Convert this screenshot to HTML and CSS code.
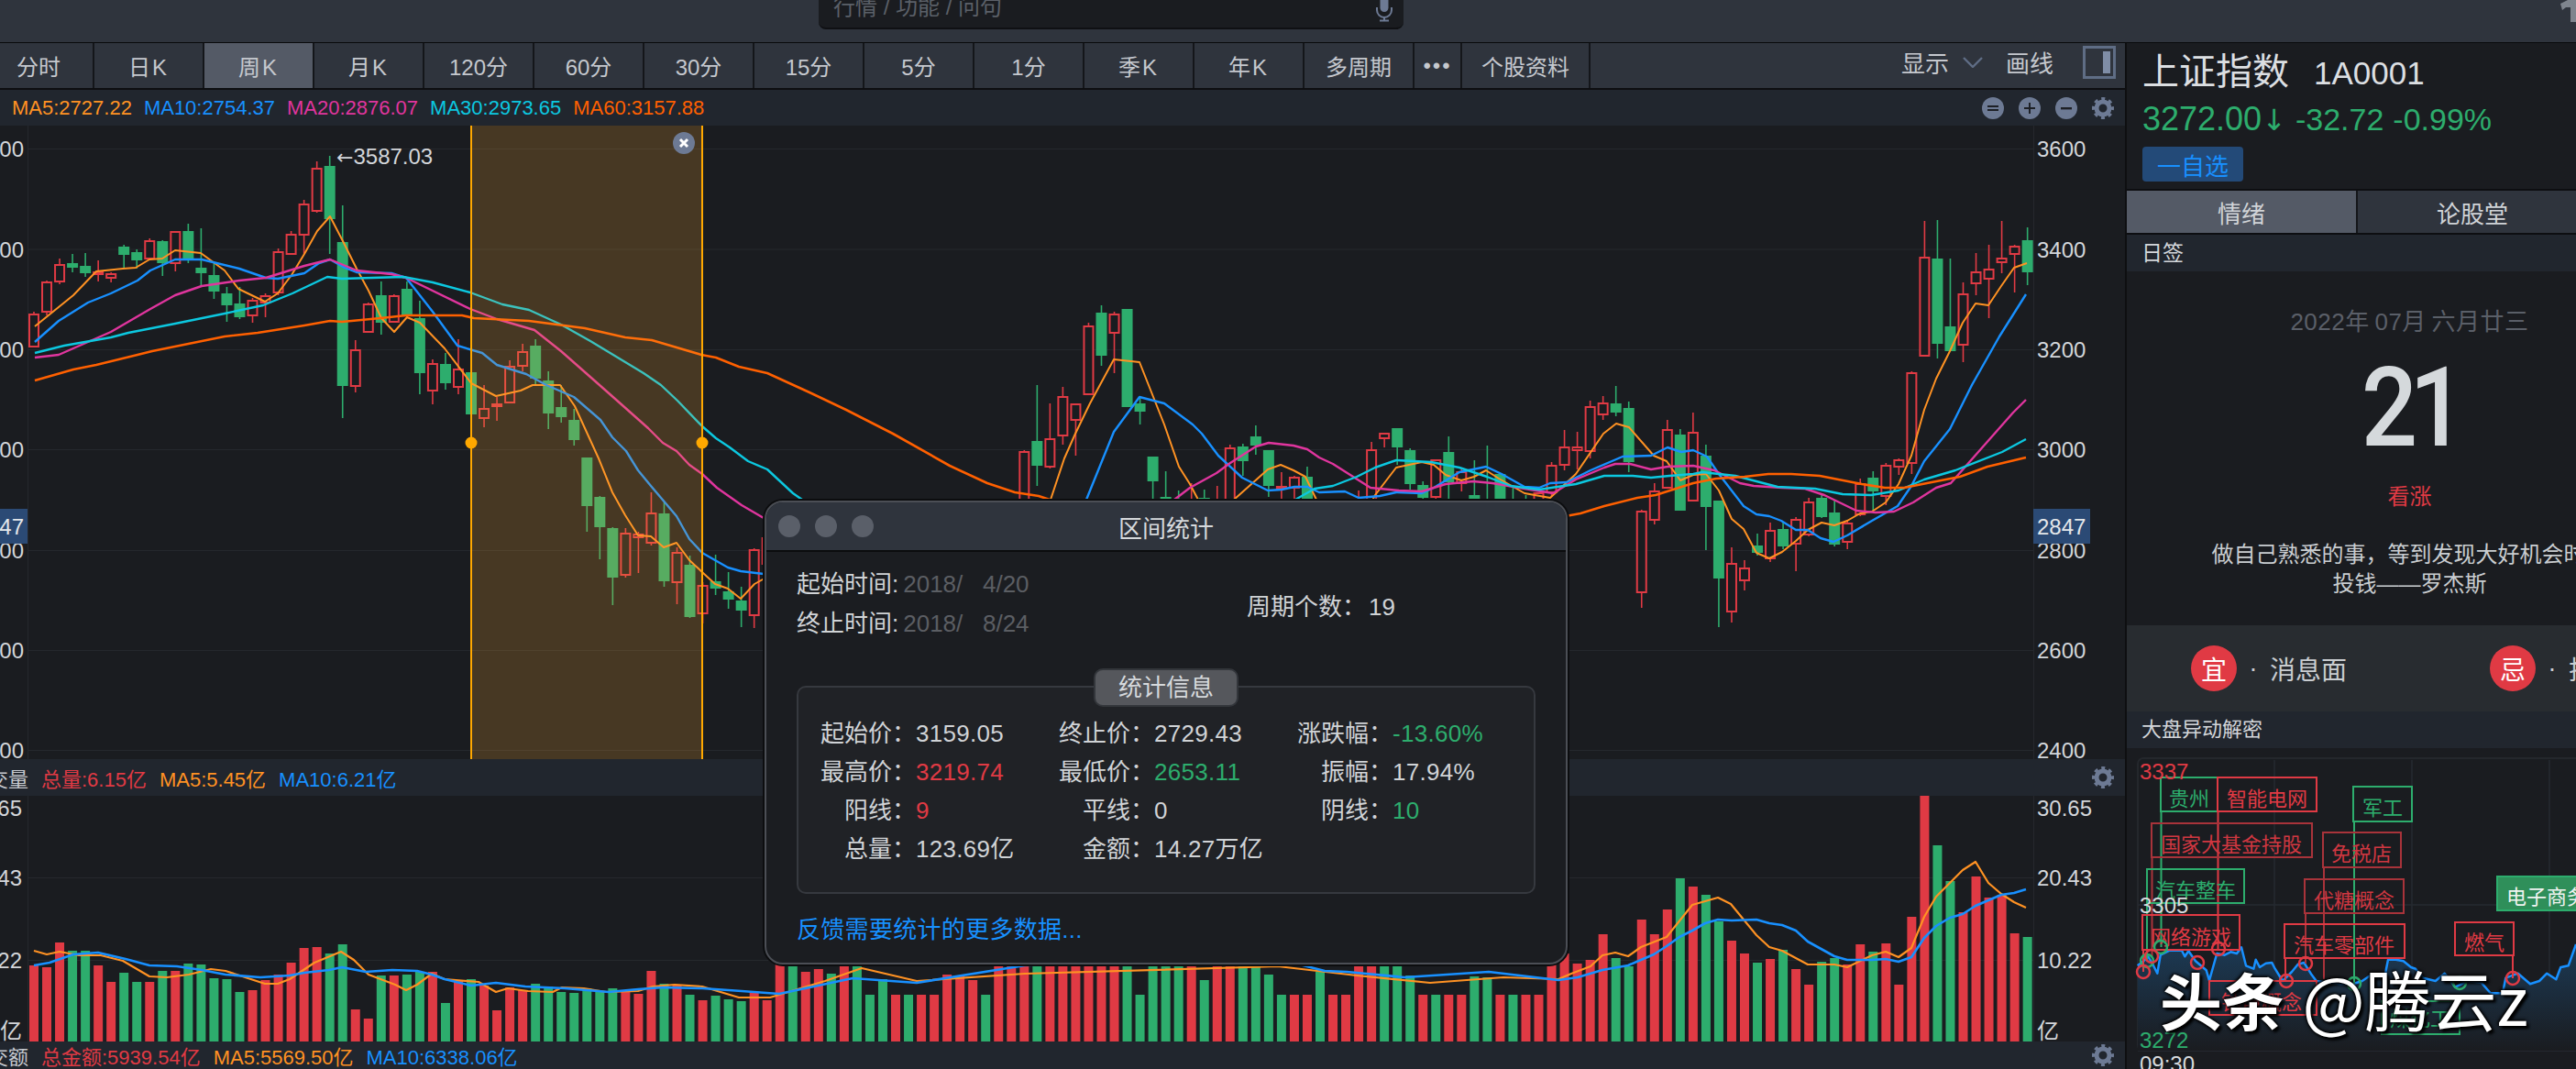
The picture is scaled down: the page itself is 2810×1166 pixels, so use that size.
FILE: index.html
```html
<!DOCTYPE html>
<html lang="zh">
<head>
<meta charset="utf-8">
<title>区间统计</title>
<link rel="stylesheet" href="styles.css">
</head>
<body>
<svg class="defs" width="0" height="0" aria-hidden="true">
  <symbol id="gear" viewBox="0 0 24 24">
    <circle cx="12" cy="12" r="7" fill="none" stroke="currentColor" stroke-width="5"/>
    <circle cx="12" cy="12" r="10" fill="none" stroke="currentColor" stroke-width="4" stroke-dasharray="3.9 3.95" stroke-dashoffset="2"/>
  </symbol>
</svg>
<div class="app">
  <header class="topbar">
    <div class="search">
      <span class="search-text">行情 / 功能 / 问句</span>
      <svg class="mic" viewBox="0 0 20 24" width="20" height="24"><rect x="5.5" y="-8" width="9" height="21" rx="4.5" fill="#6d7a94"/><path d="M2 8v3a8 8 0 0 0 16 0V8" fill="none" stroke="#6d7a94" stroke-width="2"/><path d="M10 19v3M5 22.5h10" stroke="#6d7a94" stroke-width="2"/></svg>
    </div>
    <svg class="corner" viewBox="0 0 17 24" width="17" height="24"><path d="M0 4 L8 0 H17 V24 H11 V8 H6 L2 11 Z" fill="#7f858e"/></svg>
  </header>
  <div class="main">
    <section class="left">
      <nav class="tabs">
        <span class="tab">分时</span><span class="tab tab-k">日K</span><span class="tab tab-k active">周K</span><span class="tab tab-k">月K</span><span class="tab">120分</span><span class="tab">60分</span><span class="tab">30分</span><span class="tab">15分</span><span class="tab">5分</span><span class="tab">1分</span><span class="tab tab-k">季K</span><span class="tab tab-k">年K</span><span class="tab">多周期</span><span class="tab tab-more">•••</span><span class="tab tab-info">个股资料</span>
        <div class="tools">
          <span class="tool-text">显示</span>
          <svg class="chev" viewBox="0 0 22 12" width="22" height="12"><path d="M1 1l10 10L21 1" fill="none" stroke="#5f6d85" stroke-width="2.4"/></svg>
          <span class="tool-text">画线</span>
          <svg class="layout" viewBox="0 0 36 36" width="36" height="36"><rect x="1.5" y="1.5" width="33" height="33" fill="none" stroke="#5f6d85" stroke-width="3"/><rect x="22" y="6" width="8" height="24" fill="#7f8da6"/></svg>
        </div>
      </nav>
      <div class="legend legend-main">
        <span class="ma5">MA5:2727.22</span><span class="ma10">MA10:2754.37</span><span class="ma20">MA20:2876.07</span><span class="ma30">MA30:2973.65</span><span class="ma60">MA60:3157.88</span>
        <div class="legend-tools">
          <svg class="round" viewBox="0 0 24 24" width="24" height="24"><circle cx="12" cy="12" r="12" fill="#6d7a94"/><path d="M6 9h12v2H6zM6 13h12v2H6z" fill="#1d2026"/></svg>
          <svg class="round" viewBox="0 0 24 24" width="24" height="24"><circle cx="12" cy="12" r="12" fill="#6d7a94"/><path d="M11 6h2v5h5v2h-5v5h-2v-5H6v-2h5z" fill="#1d2026"/></svg>
          <svg class="round" viewBox="0 0 24 24" width="24" height="24"><circle cx="12" cy="12" r="12" fill="#6d7a94"/><path d="M6 11h12v2.4H6z" fill="#1d2026"/></svg>
          <svg class="gear" width="24" height="24"><use href="#gear"/></svg>
        </div>
      </div>
      <svg id="kchart" class="plot" viewBox="0 137 2318 691" width="2318" height="691">
        <g class="grid">
          <path d="M30 162.5H2218M30 272H2218M30 381.500H2218M30 490.500H2218M30 600.500H2218M30 709.500H2218M30 818.500H2218M30.500 137V828M2218.500 137V828"/>
        </g>
        <g id="candles"></g>
        <g id="malines"></g>
        <rect class="sel-fill" x="514" y="137" width="252" height="691"/>
        <path class="sel-line" d="M514 137V828M766 137V828"/>
        <circle class="sel-dot" cx="514" cy="483" r="6.500"/>
        <circle class="sel-dot" cx="766" cy="483" r="6.500"/>
        <circle class="sel-close" cx="746" cy="156" r="12"/>
        <path class="sel-x" d="M742 152l8 8M750 152l-8 8"/>
        <text class="axis" x="26" y="171" text-anchor="end">3600</text>
        <text class="axis" x="26" y="281" text-anchor="end">3400</text>
        <text class="axis" x="26" y="390" text-anchor="end">3200</text>
        <text class="axis" x="26" y="499" text-anchor="end">3000</text>
        <text class="axis" x="26" y="609" text-anchor="end">2800</text>
        <text class="axis" x="26" y="718" text-anchor="end">2600</text>
        <text class="axis" x="26" y="827" text-anchor="end">2400</text>
        <rect class="cur" x="-40" y="555" width="70" height="38"/>
        <text class="axis white" x="26" y="583" text-anchor="end">2847</text>
        <text class="axis" x="2222" y="171">3600</text>
        <text class="axis" x="2222" y="281">3400</text>
        <text class="axis" x="2222" y="390">3200</text>
        <text class="axis" x="2222" y="499">3000</text>
        <text class="axis" x="2222" y="609">2800</text>
        <rect class="cur" x="2218" y="555" width="62" height="38"/>
        <text class="axis white" x="2222" y="583">2847</text>
        <text class="axis" x="2222" y="718">2600</text>
        <text class="axis" x="2222" y="827">2400</text>
        <text class="axis" x="367" y="179"><tspan class="arrow">←</tspan>3587.03</text>
      </svg>
      <div class="legend legend-sub">
        <span class="cut">成交量</span><span class="red">总量:6.15亿</span><span class="ma5">MA5:5.45亿</span><span class="ma10">MA10:6.21亿</span>
        <div class="legend-tools"><svg class="gear" width="24" height="24"><use href="#gear"/></svg></div>
      </div>
      <svg id="vchart" class="plot" viewBox="0 868 2318 268" width="2318" height="268">
        <g class="grid"><path d="M30 957.500H2218M30 1047.500H2218M30.500 868V1136M2218.500 868V1136"/></g>
        <g id="bars"></g>
        <g id="vlines"></g>
        <text class="axis" x="24" y="890" text-anchor="end">30.65</text>
        <text class="axis" x="24" y="966" text-anchor="end">20.43</text>
        <text class="axis" x="24" y="1056" text-anchor="end">10.22</text>
        <text class="axis" x="24" y="1133" text-anchor="end">亿</text>
        <text class="axis" x="2222" y="890">30.65</text>
        <text class="axis" x="2222" y="966">20.43</text>
        <text class="axis" x="2222" y="1056">10.22</text>
        <text class="axis" x="2222" y="1133">亿</text>
      </svg>
      <div class="legend legend-amt">
        <span class="cut">成交额</span><span class="red">总金额:5939.54亿</span><span class="ma5">MA5:5569.50亿</span><span class="ma10">MA10:6338.06亿</span>
        <div class="legend-tools"><svg class="gear" width="24" height="24"><use href="#gear"/></svg></div>
      </div>
    </section>
    <aside class="right">
      <div class="right-inner">
        <div class="quote-head">
          <div class="name-row"><span class="name">上证指数</span><span class="code">1A0001</span></div>
          <div class="price-row"><span class="price">3272.00<span class="price-arrow">↓</span></span><span class="chg">-32.72</span><span class="chg">-0.99%</span></div>
          <button class="fav">一自选</button>
        </div>
        <div class="rtabs"><span class="rtab active">情绪</span><span class="rtab">论股堂</span></div>
        <div class="rhead">日签</div>
        <div class="daily">
          <div class="date">2022年 07月 六月廿三</div>
          <div class="day">21</div>
          <div class="view">看涨</div>
          <p class="saying">做自己熟悉的事，等到发现大好机会时才投钱——罗杰斯</p>
        </div>
        <div class="yiji">
          <span class="badge">宜</span><span class="yj-dot">·</span><span class="yj-text">消息面</span>
          <span class="badge badge-second">忌</span><span class="yj-dot">·</span><span class="yj-text">技术面</span>
        </div>
        <div class="rhead rhead-mov">大盘异动解密</div>
        <div class="mini">
          <svg class="mini-svg" viewBox="2320 816 490 350" width="490" height="350">
            <defs><linearGradient id="area" x1="0" y1="0" x2="0" y2="1"><stop offset="0" stop-color="#1c3a55"/><stop offset="1" stop-color="#1a1c20"/></linearGradient></defs>
            <rect class="mini-frame" x="2332" y="827" width="600" height="319" rx="6"/>
            <path class="mini-grid" d="M2481 829V1146M2631 829V1146M2781 829V1146M2332 987H2810M2332 1146H2810"/>
            <path id="flowarea" fill="url(#area)" d=""/>
            <polyline id="flowline" class="flow" points=""/>
            <g class="tag-g"><path d="M2357.500 885V1033M2568 896V1073"/></g>
            <g class="tag-r"><path d="M2419.500 885V1035M2338 1036V1060M2493 1045V1070M2741 1042V1067"/></g>
            <g class="tag-d"><path d="M2347.500 935V1043M2535 946V1068M2515 996V1051"/></g>
            <g class="tag-g"><path d="M2342 985V1048"/></g>
            <g class="tag-g"><rect x="2357" y="848" width="62" height="37"/><text x="2388" y="879">贵州</text></g>
            <g class="tag-r"><rect x="2419" y="848" width="108" height="37"/><text x="2473" y="879">智能电网</text></g>
            <g class="tag-g"><rect x="2567" y="858" width="64" height="38"/><text x="2599" y="889">军工</text></g>
            <g class="tag-d"><rect x="2347" y="898" width="175" height="37"/><text x="2434" y="929">国家大基金持股</text></g>
            <g class="tag-d"><rect x="2534" y="908" width="85" height="38"/><text x="2576" y="939">免税店</text></g>
            <g class="tag-g"><rect x="2342" y="948" width="106" height="37"/><text x="2395" y="979">汽车整车</text></g>
            <g class="tag-d"><rect x="2514" y="959" width="108" height="37"/><text x="2568" y="990">代糖概念</text></g>
            <g class="tag-r"><rect x="2337" y="998" width="106" height="38"/><text x="2390" y="1030">网络游戏</text></g>
            <g class="tag-r"><rect x="2492" y="1008" width="131" height="37"/><text x="2557" y="1039">汽车零部件</text></g>
            <g class="tag-r"><rect x="2678" y="1006" width="64" height="36"/><text x="2710" y="1036">燃气</text></g>
            <g class="tag-r"><rect x="2410" y="1070" width="117" height="37"/><text x="2467" y="1101">钠电概念</text></g>
            <g class="tag-g"><rect x="2598" y="1092" width="85" height="36"/><text x="2640" y="1119">煤化工</text></g>
            <rect class="tag-fill" x="2724" y="956" width="120" height="37"/>
            <text class="tag-fill-text" x="2734" y="986">电子商务</text>
            <g class="dot-g"><circle cx="2342" cy="1048" r="7"/><circle cx="2357" cy="1033" r="7"/><circle cx="2568" cy="1073" r="7"/><circle cx="2683" cy="1072" r="7"/></g>
            <g class="dot-r"><circle cx="2338" cy="1060" r="7"/><circle cx="2347" cy="1043" r="7"/><circle cx="2397" cy="1050" r="7"/><circle cx="2420" cy="1035" r="7"/><circle cx="2515" cy="1051" r="7"/><circle cx="2494" cy="1070" r="7"/><circle cx="2741" cy="1067" r="7"/></g>
            <text class="mini-lab lab-red" x="2334" y="850">3337</text>
            <text class="mini-lab lab-white" x="2334" y="996">3305</text>
            <text class="mini-lab lab-green" x="2334" y="1143">3272</text>
            <text class="mini-lab lab-white" x="2334" y="1169">09:30</text>
          </svg>
          <div class="watermark">头条 <span class="wm-thin">@腾云z</span></div>
        </div>
      </div>
    </aside>
  </div>
  <div class="dialog">
    <div class="dlg-title">
      <span class="light"></span><span class="light"></span><span class="light"></span>
      <span class="dlg-name">区间统计</span>
    </div>
    <div class="dlg-body">
      <div class="range">
        <div class="range-times">
          <div class="rt">起始时间:<span class="muted">2018/   4/20</span></div>
          <div class="rt">终止时间:<span class="muted">2018/   8/24</span></div>
        </div>
        <div class="periods">周期个数：<span class="periods-n">19</span></div>
      </div>
      <div class="group">
        <div class="pill">统计信息</div>
        <div class="stats">
          <div class="stat"><span class="k">起始价：</span><span>3159.05</span></div>
          <div class="stat"><span class="k">终止价：</span><span>2729.43</span></div>
          <div class="stat"><span class="k">涨跌幅：</span><span class="green">-13.60%</span></div>
          <div class="stat"><span class="k">最高价：</span><span class="red">3219.74</span></div>
          <div class="stat"><span class="k">最低价：</span><span class="green">2653.11</span></div>
          <div class="stat"><span class="k">振幅：</span><span>17.94%</span></div>
          <div class="stat"><span class="k">阳线：</span><span class="red">9</span></div>
          <div class="stat"><span class="k">平线：</span><span>0</span></div>
          <div class="stat"><span class="k">阴线：</span><span class="green">10</span></div>
          <div class="stat"><span class="k">总量：</span><span>123.69亿</span></div>
          <div class="stat"><span class="k">金额：</span><span>14.27万亿</span></div>
        </div>
      </div>
      <div class="feedback">反馈需要统计的更多数据...</div>
    </div>
  </div>
</div>
<script src="chart.js"></script>
</body>
</html>
```

FILE: styles.css
```css
* { box-sizing: border-box; }
html, body { margin: 0; padding: 0; }
body {
  width: 2810px;
  height: 1166px;
  overflow: hidden;
  background: #1a1c20;
  color: #c9cdd3;
  font-family: "Liberation Sans", "Noto Sans CJK SC", sans-serif;
  font-size: 24px;
}
.defs { position: absolute; }
.app { position: relative; width: 2810px; height: 1166px; display: flex; flex-direction: column; overflow: hidden; }

.topbar { height: 47px; flex: none; display: flex; justify-content: space-between; background: #2f343d; border-bottom: 1px solid #08090b; }
.search { margin-left: 893px; width: 638px; height: 32px; background: #1a1c20; border-radius: 0 0 8px 8px; border-bottom: 2px solid #0f1013; display: flex; justify-content: space-between; padding: 0 10px 0 16px; }
.search-text { color: #5b6068; font-size: 24px; line-height: 16px; white-space: nowrap; }
.mic { margin-right: 1px; }
.corner { display: block; }

.main { flex: 1; display: flex; min-height: 0; }
.left { width: 2318px; flex: none; display: flex; flex-direction: column; }

.tabs { height: 51px; flex: none; display: flex; margin-left: -17px; width: 2335px; background: #2f343d; border-bottom: 2px solid #0d0e11; }
.tab { width: 120px; flex: none; display: flex; align-items: center; justify-content: center; border-right: 2px solid #14161a; color: #c5c8ce; white-space: pre; font-size: 24px; }
.tab.active { background: #545a66; }
.tab-k { letter-spacing: 2px; }
.tab-more { width: 52px; font-size: 24px; letter-spacing: 2px; }
.tab-info { width: 140px; }
.tools { margin-left: auto; display: flex; align-items: center; padding-right: 10px; }
.tool-text { font-size: 26px; color: #c5c8ce; margin-bottom: 8px; }
.chev { margin: 0 25px 8px 15px; }
.layout { margin: 0 0 8px 32px; }

.legend { flex: none; display: flex; align-items: center; background: #21262e; font-size: 22px; white-space: nowrap; overflow: hidden; }
.legend-main { height: 39px; padding-left: 13px; gap: 13px; }
.legend-sub { height: 40px; gap: 14px; }
.legend-amt { height: 30px; gap: 14px; }
.cut { width: 31px; flex: none; display: flex; justify-content: flex-end; overflow: hidden; color: #c5c8ce; }
.legend-tools { margin-left: auto; margin-right: 12px; display: flex; gap: 16px; align-items: center; }
.gear { color: #6d7a94; display: block; }
.round { display: block; }
.ma5 { color: #ff9223; }
.ma10 { color: #1890ff; }
.ma20 { color: #e0359e; }
.ma30 { color: #0cc8e0; }
.ma60 { color: #ff6000; }
.red { color: #e03a44; }
.green { color: #2dad6d; }

.plot { display: block; flex: none; background: #1a1c20; }
.grid path { stroke: #25282d; stroke-width: 1; fill: none; }
.axis { font-size: 24px; fill: #d3d6da; }
.axis.white { fill: #e4e7ea; }
.arrow { font-family: "DejaVu Sans", sans-serif; font-size: 22px; }
.cur { fill: #2b4a75; }
.sel-fill { fill: rgba(255, 170, 50, .2); }
.sel-line { stroke: #ffa800; stroke-width: 2; fill: none; }
.sel-dot { fill: #ffa800; }
.sel-close { fill: #6d7a94; }
.sel-x { stroke: #fff; stroke-width: 3; fill: none; }

.right { width: 492px; flex: none; overflow: hidden; border-left: 2px solid #0e0f11; background: #1a1c20; }
.right-inner { width: 617px; display: flex; flex-direction: column; height: 100%; }
.quote-head { height: 161px; flex: none; padding: 5px 0 0 17px; border-bottom: 2px solid #0d0e11; }
.name-row { display: flex; align-items: baseline; height: 52px; color: #dcdfe2; }
.name { font-size: 40px; line-height: 52px; }
.code { font-size: 35px; margin-left: 27px; }
.price-row { display: flex; align-items: baseline; gap: 10px; height: 44px; margin-top: 4px; color: #2dad6d; font-size: 34px; line-height: 44px; }
.price { font-size: 36px; }
.price-arrow { font-family: "DejaVu Sans", sans-serif; font-size: 32px; }
.fav { display: block; width: 110px; height: 38px; margin: 8px 0 0; padding: 0; border: 0; border-radius: 4px; background: #234a78; color: #1890ff; font: 26px "Liberation Sans", "Noto Sans CJK SC", sans-serif; }
.rtabs { height: 48px; flex: none; display: flex; border-bottom: 2px solid #0d0e11; }
.rtab { width: 252px; flex: none; display: flex; align-items: center; justify-content: center; background: #2f343d; border-right: 2px solid #14161a; color: #d0d3d7; font-size: 26px; }
.rtab.active { background: #545a66; }
.rhead { height: 40px; flex: none; padding-left: 16px; background: #21262e; line-height: 40px; font-size: 23px; color: #d3d6da; }
.daily { height: 386px; flex: none; display: flex; flex-direction: column; align-items: center; }
.date { margin-top: 37px; height: 36px; line-height: 36px; font-size: 26px; letter-spacing: .5px; color: #5a5f68; white-space: nowrap; word-spacing: -2px; }
.day { margin-top: 26px; height: 100px; line-height: 100px; font-family: Roboto, "Liberation Sans", sans-serif; font-size: 120px; font-weight: 500; letter-spacing: -10px; color: #d5d9dc; transform: scaleX(.9); }
.view { margin-top: 32px; height: 30px; line-height: 30px; font-size: 24px; color: #e03a44; }
.saying { margin: 32px 0 0; width: 440px; text-align: center; line-height: 32px; font-size: 24px; color: #c9cdd0; }
.yiji { height: 94px; flex: none; background: #282c30; display: flex; align-items: center; padding-left: 70px; }
.badge { width: 50px; height: 50px; flex: none; border-radius: 50%; background: #e03a44; color: #fff; font-size: 28px; display: flex; align-items: center; justify-content: center; }
.badge-second { margin-left: 156px; }
.yj-dot { width: 36px; flex: none; text-align: center; font-size: 28px; color: #c9cdd0; }
.yj-text { font-size: 28px; color: #c9cdd0; white-space: nowrap; width: 84px; flex: none; }
.rhead-mov { font-size: 22px; }
.mini { position: relative; height: 350px; flex: none; }
.mini-svg { display: block; }
.mini-frame { fill: none; stroke: #24272c; stroke-width: 2; }
.mini-grid { stroke: #262a30; stroke-width: 1.5; fill: none; }
.flow { fill: none; stroke: #1890ff; stroke-width: 2.5; stroke-linejoin: round; }
.tag-g path, .tag-r path, .tag-d path { fill: none; stroke-width: 2; }
.tag-g rect, .tag-r rect, .tag-d rect { fill: none; stroke-width: 2; }
.tag-g text, .tag-r text, .tag-d text { font-size: 22px; text-anchor: middle; }
.tag-g path, .tag-g rect { stroke: #2dad6d; }
.tag-g text { fill: #2dad6d; }
.tag-r path, .tag-r rect { stroke: #e03a44; }
.tag-r text { fill: #e03a44; }
.tag-d path, .tag-d rect { stroke: #a8333a; }
.tag-d text { fill: #d03740; }
.tag-fill { fill: #2f8f5a; stroke: #2dad6d; stroke-width: 2; }
.tag-fill-text { font-size: 22px; fill: #f0f3f1; }
.dot-g circle { fill: none; stroke: #2dad6d; stroke-width: 2.5; }
.dot-r circle { fill: none; stroke: #e03a44; stroke-width: 2.5; }
.mini-lab { font-size: 24px; }
.lab-red { fill: #e03a44; }
.lab-white { fill: #d8dbde; }
.lab-green { fill: #2dad6d; }
.watermark { position: absolute; left: 36px; top: 222px; font-family: "Noto Sans CJK SC", sans-serif; font-weight: 700; font-size: 68px; line-height: 100px; white-space: nowrap; color: #fff; text-shadow: 3px 3px 3px #000, -1px -1px 3px #000, 0 0 4px #000; }
.wm-thin { font-weight: 400; font-size: 72px; margin-left: 4px; }

.dialog { position: absolute; left: 834px; top: 546px; width: 876px; height: 506px; border: 2px solid #4b4e55; border-radius: 20px; background: #1b1d21; box-shadow: 0 0 0 2px #0c0d0f; overflow: hidden; }
.dlg-title { position: relative; height: 54px; background: #2f343d; border-bottom: 2px solid #0b0c0e; display: flex; align-items: center; padding-left: 13px; gap: 16px; }
.light { width: 24px; height: 24px; border-radius: 50%; background: #5a5f69; }
.dlg-name { position: absolute; left: 0; right: 0; text-align: center; font-size: 26px; color: #d6d9dc; }
.dlg-body { padding: 14px 33px 0; font-size: 26px; }
.range { display: flex; align-items: center; }
.rt { height: 43px; line-height: 43px; color: #d0d3d6; white-space: pre; }
.range-times { width: 491px; }
.muted { color: #5b5e63; margin-left: 5px; }
.periods { color: #d0d3d6; }
.periods-n { margin-left: 3px; }
.group { position: relative; height: 227px; margin-top: 46px; border: 2px solid #36393f; border-radius: 10px; background: #202226; padding-top: 29px; }
.pill { position: absolute; left: 322px; top: -21px; width: 158px; height: 42px; line-height: 38px; text-align: center; background: #55575c; border: 2px solid #33363b; border-radius: 10px; color: #d6d9dc; }
.stats { display: grid; grid-template-columns: repeat(3, 260px); }
.stat { height: 42px; line-height: 42px; display: flex; color: #d0d3d6; white-space: nowrap; letter-spacing: .3px; }
.k { width: 128px; text-align: right; flex: none; letter-spacing: 0; }
.feedback { margin-top: 19px; height: 40px; line-height: 40px; color: #1890ff; letter-spacing: .3px; }
```

FILE: chart.js
```js
(function () {
  var NS = 'http://www.w3.org/2000/svg';
  var RED = '#e03a44', GREEN = '#2dad6d', BG = '#1a1c20';
  function X(i) { return 37 + 14.03 * i; }
  function el(parent, name, attrs) {
    var n = document.createElementNS(NS, name);
    for (var k in attrs) n.setAttribute(k, attrs[k]);
    parent.appendChild(n);
    return n;
  }

  // [index, r|g, bodyTop, bodyBottom, wickTop, wickBottom]
  var C = [
    [0,'r',343,378,340,378],[1,'r',308,340,306,344],[2,'r',289,307,282,310],[3,'g',287,292,277,297],[4,'g',290,298,276,302],
    [5,'r',297,298,284,307],[6,'r',299,303,297,308],[7,'g',269,278,267,292],[8,'g',275,284,272,293],[9,'r',263,282,260,284],
    [10,'g',263,287,262,301],[11,'r',253,287,252,296],[12,'g',252,283,244,287],[13,'g',292,298,249,312],[14,'g',300,318,285,326],
    [15,'g',320,333,313,351],[16,'g',331,346,313,348],[17,'r',328,344,325,352],[18,'r',323,330,320,346],[19,'r',275,319,271,322],
    [20,'r',256,277,252,278],[21,'r',223,256,218,277],[22,'r',184,230,176,232],[23,'g',181,239,170,277],[24,'g',264,421,224,456],
    [25,'r',382,421,371,428],[26,'r',332,362,330,363],[27,'g',322,352,307,365],[28,'r',323,351,321,352],[29,'g',315,345,307,347],
    [30,'g',347,407,328,430],[31,'r',397,426,392,441],[32,'g',397,418,385,425],[33,'r',403,422,370,430],[34,'g',406,452,400,452],
    [35,'r',446,456,420,466],[36,'r',441,443,433,459],[37,'r',400,439,393,440],[38,'r',384,399,375,405],[39,'g',377,413,370,420],
    [40,'g',415,451,405,468],[41,'g',444,455,420,461],[42,'g',458,480,446,486],[43,'g',499,552,499,580],[44,'g',542,575,541,610],
    [45,'g',576,630,575,660],[46,'r',582,627,576,630],[47,'r',583,586,580,625],[48,'r',560,592,537,595],[49,'g',560,634,548,640],
    [50,'r',603,635,597,659],[51,'g',616,673,606,674],[52,'r',639,669,635,680],[53,'g',634,642,605,649],[54,'g',645,654,624,664],
    [55,'g',655,666,640,684],[56,'r',600,671,598,685],[57,'r',587,615,580,640],
    [77,'r',493,550,491,550],[78,'g',481,508,420,530],[79,'r',479,509,440,511],[80,'r',433,475,422,485],[81,'r',441,458,441,497],
    [82,'r',356,430,352,431],[83,'g',341,388,333,399],[84,'r',343,363,340,407],[85,'g',337,444,337,444],[86,'g',440,449,433,463],
    [87,'g',498,525,498,548],[88,'g',542,555,514,555],[89,'g',548,555,535,555],[90,'r',548,555,527,555],[91,'g',543,555,534,555],
    [92,'r',548,555,530,555],[93,'r',489,555,485,555],[94,'g',487,503,484,519],[95,'g',476,486,464,496],[96,'g',491,530,491,542],
    [97,'r',531,533,515,545],[98,'r',521,532,519,545],[99,'g',520,555,509,555],[102,'r',548,555,544,555],[103,'r',548,555,535,555],
    [104,'r',491,555,482,555],[105,'r',473,478,472,488],[106,'g',467,488,467,507],[107,'g',491,528,489,534],[108,'g',529,543,525,550],
    [109,'r',502,542,502,550],[110,'g',493,526,476,545],[111,'r',515,527,510,536],[112,'g',540,548,502,550],[113,'g',548,555,486,555],
    [114,'g',517,555,517,555],[115,'g',548,555,530,555],[116,'g',548,555,540,555],[117,'r',538,555,538,555],[118,'r',508,537,504,541],
    [119,'r',488,507,469,513],[120,'r',488,491,471,512],[121,'r',444,492,437,500],[122,'r',440,452,432,458],[123,'g',440,450,421,454],
    [124,'g',445,504,438,515],[125,'r',558,646,556,663],[126,'r',536,567,527,572],[127,'r',469,532,458,533],[128,'g',474,557,468,557],
    [129,'r',472,546,450,547],[130,'g',497,553,485,600],[131,'g',546,631,546,684],[132,'r',615,667,597,679],[133,'r',620,633,611,644],
    [134,'g',595,603,582,606],[135,'r',579,609,570,613],[136,'g',577,596,570,599],[137,'r',567,593,564,623],[138,'r',548,583,543,585],
    [139,'g',543,564,538,565],[140,'g',559,594,545,596],[141,'r',571,591,567,599],[142,'r',528,561,522,563],[143,'g',521,536,514,558],
    [144,'r',508,541,505,551],[145,'r',502,509,500,518],[146,'r',407,505,405,517],[147,'r',281,388,241,388],[148,'g',282,375,240,391],
    [149,'g',356,383,282,383],[150,'r',321,376,308,395],[151,'r',297,309,276,322],[152,'r',294,304,267,347],[153,'r',282,286,241,298],
    [154,'r',269,277,267,319],[155,'g',262,297,248,311]
  ];

  var cg = document.getElementById('candles');
  C.forEach(function (c) {
    var x = X(c[0]), col = c[1] === 'r' ? RED : GREEN;
    el(cg, 'line', { x1: x, x2: x, y1: c[4], y2: c[5], stroke: col, 'stroke-width': 1.6 });
    if (c[1] === 'r') {
      el(cg, 'rect', { x: x - 5, y: c[2], width: 10, height: Math.max(c[3] - c[2], 2), fill: BG, stroke: col, 'stroke-width': 2 });
    } else {
      el(cg, 'rect', { x: x - 6, y: c[2], width: 12, height: c[3] - c[2], fill: col });
    }
  });

  var MA = [
    ['#ff9223', 2, '38,356 80,322 105,296 134,293 148,292 163,283 177,282 191,273 219,276 245,295 260,315 289,329 303,320 318,300 332,277 346,252 360,236 374,263 389,293 402,317 416,347 430,362 444,346 458,352 485,380 514,418 541,432 568,426 581,420 611,420 627,443 653,500 668,537 682,562 696,584 710,585 724,597 738,592 752,611 780,637 794,642 808,653 823,637 832,632 1146,545 1161,500 1173,473 1189,440 1215,392 1243,395 1270,463 1286,509 1298,528 1307,545 1325,600 1346,545 1383,512 1397,507 1411,513 1424,520 1436,545 1470,600 1500,540 1523,510 1551,504 1564,507 1577,518 1594,524 1608,520 1621,513 1635,522 1663,538 1691,543 1719,517 1749,473 1763,462 1777,466 1804,497 1818,503 1833,524 1847,518 1861,517 1875,535 1889,566 1902,577 1916,603 1930,609 1944,602 1959,590 1972,578 1987,570 2001,573 2015,568 2029,560 2042,558 2057,548 2071,528 2085,497 2099,447 2112,413 2127,383 2141,352 2155,331 2169,333 2183,312 2197,292 2211,287'],
    ['#1890ff', 2.4, '38,373 64,350 96,330 121,320 150,306 164,295 191,283 220,283 261,293 290,303 303,304 332,298 348,287 360,283 376,292 389,297 427,298 443,303 472,340 499,377 526,385 542,398 574,408 596,420 626,433 655,458 668,477 683,492 696,513 710,530 738,563 752,588 766,603 794,619 808,623 833,626 1185,545 1215,471 1243,433 1270,440 1301,463 1311,473 1329,497 1355,521 1383,535 1398,534 1412,531 1426,531 1439,537 1467,536 1482,543 1505,541 1523,537 1551,538 1564,532 1592,515 1621,509 1638,517 1663,531 1679,532 1691,527 1709,526 1735,513 1770,498 1801,497 1819,488 1834,493 1847,491 1862,498 1875,517 1902,552 1916,561 1930,563 1943,568 1959,578 1972,578 1986,587 2000,591 2015,584 2042,568 2070,552 2085,530 2099,503 2127,468 2151,420 2181,367 2210,321'],
    ['#e0359e', 2.4, '38,390 64,387 121,362 164,337 191,322 220,312 261,306 290,303 332,290 360,283 389,295 427,299 443,303 513,337 542,348 583,360 612,383 654,420 680,443 707,467 723,483 738,492 752,507 766,517 782,532 809,551 833,565 1281,545 1298,532 1327,516 1342,505 1370,487 1384,483 1411,486 1426,490 1439,499 1454,506 1495,532 1526,535 1551,536 1577,528 1607,525 1628,527 1663,533 1694,538 1719,523 1750,510 1762,506 1778,506 1801,512 1819,509 1847,508 1870,513 1898,527 1913,530 1944,532 1969,533 1990,540 2025,557 2046,559 2066,558 2087,548 2112,532 2128,527 2158,493 2196,450 2210,436'],
    ['#0cc8e0', 2.4, '38,385 70,377 121,368 140,363 191,353 245,342 287,333 319,320 357,302 373,304 440,302 472,308 513,319 548,332 577,338 612,354 644,372 702,407 721,420 739,437 766,465 781,478 796,488 816,503 837,512 865,538 875,545 900,600 1400,600 1413,545 1434,533 1454,530 1480,520 1500,510 1523,502 1561,504 1592,510 1622,520 1648,530 1679,534 1719,528 1750,519 1781,519 1801,521 1821,519 1847,517 1857,515 1893,519 1939,531 1980,533 2010,539 2041,540 2071,535 2099,523 2133,513 2184,493 2210,479'],
    ['#ff6000', 2.6, '38,415 80,403 105,398 150,387 166,383 245,367 281,363 332,355 360,350 373,351 415,347 443,344 504,344 517,347 577,350 638,358 682,368 711,371 765,387 781,390 806,400 837,407 883,428 923,447 974,473 1036,508 1077,527 1107,537 1133,541 1145,545 1400,620 1724,560 1750,552 1786,543 1806,540 1847,527 1872,522 1903,520 1929,517 1954,517 1985,519 2031,528 2056,532 2077,532 2102,527 2138,520 2168,509 2210,499']
  ];
  var mg = document.getElementById('malines');
  MA.forEach(function (m) {
    el(mg, 'polyline', { points: m[2], fill: 'none', stroke: m[0], 'stroke-width': m[1], 'stroke-linejoin': 'round' });
  });

  // volume bars: colour + top, page pixels
  var V = 'r1053 r1055 r1028 g1037 g1037 r1053 r1071 g1061 g1071 r1071 g1059 r1059 g1051 g1052 g1067 g1068 g1082 r1080 r1069 r1063 r1050 r1034 r1033 g1040 g1030 r1101 r1111 g1064 r1064 g1063 g1060 r1060 g1094 r1070 g1068 r1075 r1102 r1077 r1080 g1073 g1076 g1082 g1083 g1078 g1082 g1078 r1080 r1084 r1059 g1073 r1075 g1085 r1091 g1086 g1090 g1092 r1082 r1091 ' +
    'r1045 g1045 r1060 r1057 g1062 r1050 g1050 g1085 g1068 r1085 g1085 r1085 r1085 r1063 r1065 r1069 g1085 r1045 r1045 r1045 g1045 r1045 r1045 r1045 r1045 r1045 r1045 g1045 g1085 g1045 g1045 g1045 r1045 g1069 r1045 r1045 g1045 g1045 g1063 g1085 r1085 r1085 g1060 r1085 r1085 r1054 r1053 g1053 g1054 g1064 r1085 g1085 r1085 r1085 g1065 g1066 r1085 g1085 r1085 r1085 r1050 r1040 ' +
    'r1051 r1047 r1019 g1045 g1054 r1003 r1019 r992 g958 r967 g976 g1005 r1026 r1040 g1050 r1046 g1036 r1057 r1074 g1049 g1045 r1052 r1030 g1038 r1029 r1074 r1000 r868 g922 g961 r995 r956 r979 r976 r1018 g1022';
  var bg = document.getElementById('bars');
  V.split(' ').forEach(function (s, i) {
    var top = +s.slice(1);
    el(bg, 'rect', { x: X(i) - 5, y: top, width: 10, height: 1136 - top, fill: s[0] === 'r' ? RED : GREEN });
  });
  var VL = [
    ['#ff9223', 2.2, '37,1037 51,1041 65,1038 86,1042 110,1042 134,1048 163,1065 182,1066 206,1063 230,1057 246,1059 289,1073 303,1073 316,1068 343,1050 372,1038 386,1047 402,1063 431,1074 443,1080 455,1074 471,1062 485,1068 522,1071 541,1082 554,1078 576,1081 603,1082 613,1077 637,1078 661,1082 696,1081 712,1076 736,1074 766,1076 806,1088 840,1088 900,1070 940,1056 1000,1070 1118,1062 1394,1054 1480,1064 1560,1072 1640,1066 1700,1068 1714,1062 1735,1054 1748,1042 1762,1039 1776,1043 1790,1033 1818,1022 1846,987 1874,979 1888,986 1916,1020 1930,1033 1944,1037 1972,1052 2001,1052 2015,1055 2042,1042 2057,1038 2071,1044 2085,1034 2099,1000 2112,978 2141,949 2155,940 2169,963 2183,975 2197,984 2210,990'],
    ['#1890ff', 2.6, '37,1053 54,1050 80,1041 107,1039 137,1046 163,1053 193,1054 220,1058 246,1063 284,1066 316,1064 332,1061 359,1058 373,1055 399,1060 428,1058 455,1059 471,1063 485,1068 514,1075 541,1072 573,1076 616,1078 664,1082 696,1079 723,1077 766,1078 809,1081 850,1084 930,1067 1000,1072 1118,1053 1394,1046 1445,1059 1469,1060 1532,1066 1624,1060 1700,1069 1721,1066 1748,1058 1776,1053 1790,1047 1804,1041 1818,1032 1832,1022 1846,1015 1860,1007 1874,1003 1889,1004 1916,1003 1930,1007 1944,1009 1959,1015 1972,1027 2001,1043 2015,1047 2042,1047 2057,1046 2071,1049 2085,1044 2099,1023 2112,1010 2127,1001 2141,997 2155,988 2169,982 2183,976 2197,974 2210,970']
  ];
  var vg = document.getElementById('vlines');
  VL.forEach(function (m) {
    el(vg, 'polyline', { points: m[2], fill: 'none', stroke: m[0], 'stroke-width': m[1], 'stroke-linejoin': 'round' });
  });

  // intraday curve in the mini chart
  var F = [[95,760],[120,740],[130,730],[145,755],[160,785],[170,725],[200,710],[240,710],[250,730],[262,712],[285,745],[320,775],[330,808],[355,720],[380,725],[400,715],[420,720],[435,700],[450,760],[475,770],[482,740],[495,765],[515,752],[535,750],[545,770],[570,810],[600,780],[620,755],[640,750],[665,790],[680,810],[720,815],[760,820],[800,820],[830,810],[860,790],[885,800],[905,790],[915,740],[940,740],[965,745],[990,765],[1005,770],[1030,800],[1070,810],[1100,785],[1135,830],[1175,810],[1220,815],[1250,850],[1290,850],[1300,800],[1340,785],[1380,820],[1410,810],[1435,785],[1465,805],[1480,765],[1505,760],[1530,690]];
  var pts = F.map(function (p) { return (2300 + p[0] / 3).toFixed(1) + ',' + (800 + p[1] / 3).toFixed(1); });
  document.getElementById('flowline').setAttribute('points', pts.join(' '));
  document.getElementById('flowarea').setAttribute('d', 'M' + pts.join('L') + 'L2810,1146L2332,1146Z');
})();
```
